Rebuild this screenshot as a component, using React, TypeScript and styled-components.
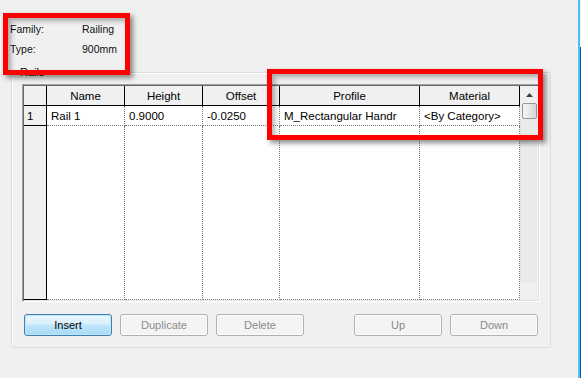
import React from 'react';
import styled, { createGlobalStyle } from 'styled-components';

const GlobalStyle = createGlobalStyle`
  html, body {
    margin: 0;
    padding: 0;
    background: #f0f0f0;
  }

  body {
    font-family: 'Liberation Sans', Arial, sans-serif;
    color: #000;
  }
`;

const Page = styled.div`
  width: 581px;
  height: 378px;
  display: flex;
  overflow: hidden;
`;

const Main = styled.div`
  position: relative;
  flex: 1;
`;

const WindowEdge = styled.div`
  width: 1px;
  border-left: 2px solid #4cc3f3;
  background: linear-gradient(to bottom, #f0f0f0 47px, #1f4f9e 47px);
`;

const Info = styled.div`
  height: 65px;
  box-sizing: border-box;
  padding: 19px 0 6px 10px;
  display: grid;
  grid-template-columns: 72px auto;
  grid-auto-rows: 20px;
  align-items: center;
  font-size: 10.5px;
  color: #111;
`;

const GroupBox = styled.fieldset`
  width: 540px;
  box-sizing: border-box;
  margin: 0 0 0 11px;
  padding: 5px 10px 11px 10px;
  border: 1px solid #d5dfe5;
  border-radius: 3px;
  box-shadow: inset 1px 1px 0 #fff;
  min-inline-size: 0;
`;

const Legend = styled.legend`
  margin-left: -4px;
  padding: 0 2px;
  font-size: 11px;
  line-height: 14px;
`;

const Grid = styled.div`
  display: flex;
  height: 218px;
  box-sizing: border-box;
  padding: 1px;
  border: 1px solid;
  border-color: #a0a0a0 #fff #fff #a0a0a0;
  box-shadow: inset 1px 1px 0 #696969, inset -1px -1px 0 #e3e3e3;
`;

const Table = styled.div`
  display: grid;
  grid-template-columns: 23px 78px 78px 77px 140px 100px;
  grid-template-rows: 20px 20px 174px;
  font-size: 11.5px;
`;

const HeaderCell = styled.div`
  box-sizing: border-box;
  background: #f0f0f0;
  border-right: 1px solid #000;
  border-bottom: 1px solid #000;
  display: flex;
  align-items: center;
  justify-content: center;
`;

const RowHead = styled.div`
  box-sizing: border-box;
  background: #f0f0f0;
  border-right: 1px solid #000;
  border-bottom: 1px solid #000;
  padding-left: 3px;
  display: flex;
  align-items: center;
`;

const Cell = styled.div`
  box-sizing: border-box;
  background: #fff;
  border-right: 1px dotted #7a7a7a;
  border-bottom: 1px dotted #7a7a7a;
  padding-left: 4px;
  display: flex;
  align-items: center;
  white-space: nowrap;
  overflow: hidden;
`;

const ScrollBar = styled.div`
  width: 18px;
  display: flex;
  flex-direction: column;
  background: #f0f0f0;
`;

const ArrowButton = styled.div`
  height: 17px;
  display: flex;
  align-items: center;
  justify-content: center;
  padding-left: 1px;
`;

const Thumb = styled.div`
  height: 16px;
  margin: 0 1px 0 2px;
  box-sizing: border-box;
  border: 1px solid #979797;
  border-radius: 2px;
  background: linear-gradient(to right, #f6f6f6, #e4e4e4 60%, #d6d6d6);
`;

const Track = styled.div`
  flex: 1;
  background: #eaeaea;
  border-left: 1px solid #e2e2e2;
  border-right: 1px solid #f4f4f4;
`;

const Corner = styled.div`
  height: 17px;
  background: #f0f0f0;
`;

const Buttons = styled.div`
  display: flex;
  gap: 8px;
  margin-top: 12px;
  padding: 0 2px 0 2px;
`;

const Button = styled.button<{ $primary?: boolean }>`
  width: 88px;
  height: 22px;
  box-sizing: border-box;
  font-family: 'Liberation Sans', Arial, sans-serif;
  font-size: 11px;
  border-radius: 3px;
  padding: 0;
  border: 1px solid ${(p) => (p.$primary ? '#3c7fb1' : '#adb2b5')};
  color: ${(p) => (p.$primary ? '#000' : '#8a8a8a')};
  background: ${(p) =>
    p.$primary
      ? 'linear-gradient(to bottom, #eaf6fd 0%, #d9f0fc 45%, #bee6fd 50%, #a7d9f5 100%)'
      : '#f4f4f4'};
  box-shadow: inset 0 0 0 1px ${(p) => (p.$primary ? '#c4e5f6' : '#fcfcfc')};
`;

const Spacer = styled.div`
  flex: 1;
`;

const Highlight = styled.div<{ $x: number; $y: number; $w: number; $h: number }>`
  position: absolute;
  left: ${(p) => p.$x}px;
  top: ${(p) => p.$y}px;
  width: ${(p) => p.$w}px;
  height: ${(p) => p.$h}px;
  box-sizing: border-box;
  border: 5px solid #ff0000;
  box-shadow: 3px 3px 5px rgba(0, 0, 0, 0.45), inset 3px 3px 5px rgba(0, 0, 0, 0.3);
  pointer-events: none;
`;

const columns = ['Name', 'Height', 'Offset', 'Profile', 'Material'];
const row = ['Rail 1', '0.9000', '-0.0250', 'M_Rectangular Handr', '<By Category>'];

export default function App() {
  return (
    <Page>
      <GlobalStyle />
      <Main>
        <Info>
          <span>Family:</span>
          <span>Railing</span>
          <span>Type:</span>
          <span>900mm</span>
        </Info>
        <GroupBox>
          <Legend>Rails</Legend>
          <Grid>
            <Table>
              <HeaderCell />
              {columns.map((c) => (
                <HeaderCell key={c}>{c}</HeaderCell>
              ))}
              <RowHead>1</RowHead>
              {row.map((v, i) => (
                <Cell key={i}>{v}</Cell>
              ))}
              <RowHead />
              {columns.map((c) => (
                <Cell key={c} />
              ))}
            </Table>
            <ScrollBar>
              <ArrowButton>
                <svg width="7" height="4" viewBox="0 0 7 4">
                  <path d="M0 4 L3.5 0 L7 4 Z" fill="#404040" />
                </svg>
              </ArrowButton>
              <Thumb />
              <Track />
              <Corner />
            </ScrollBar>
          </Grid>
          <Buttons>
            <Button $primary>Insert</Button>
            <Button disabled>Duplicate</Button>
            <Button disabled>Delete</Button>
            <Spacer />
            <Button disabled>Up</Button>
            <Button disabled>Down</Button>
          </Buttons>
        </GroupBox>
        <Highlight $x={3} $y={13} $w={127} $h={62} />
        <Highlight $x={267} $y={69} $w={276} $h={71} />
      </Main>
      <WindowEdge />
    </Page>
  );
}
